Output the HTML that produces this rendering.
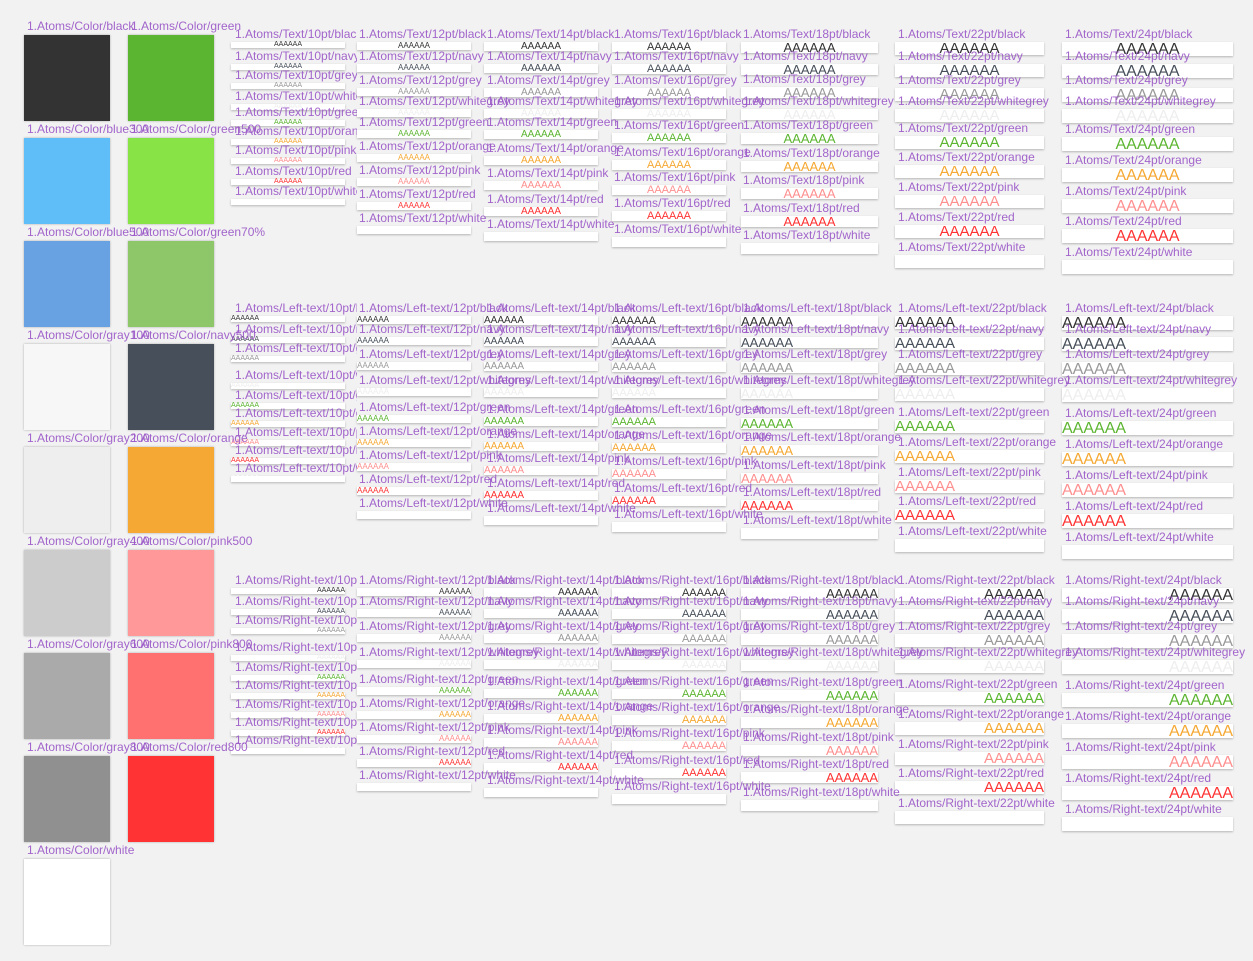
<!DOCTYPE html>
<html><head><meta charset="utf-8"><style>
html,body{margin:0;padding:0}
body{width:1253px;height:961px;background:#f2f2f2;position:relative;overflow:hidden;font-family:"Liberation Sans",sans-serif}
i{position:absolute;font-style:normal;font-size:12px;line-height:14px;margin-top:1px;color:#9b59c8;white-space:nowrap;z-index:2;opacity:.92}
b{position:absolute;font-weight:normal;background:#fff;box-shadow:0 1px 2px rgba(0,0,0,.25);white-space:nowrap;overflow:visible;text-align:center;z-index:1}
.sw{position:absolute;width:86px;height:86px;box-shadow:0 0 2px rgba(0,0,0,.3)}
.s10 i{left:235px;width:122px;overflow:hidden}.s10 b{left:231px;width:114px;height:6px;font-size:7px;line-height:6px}
.s12 i{left:359px}.s12 b{left:357px;width:114px;height:8px;font-size:8px;line-height:8px}
.s14 i{left:487px}.s14 b{left:484px;width:114px;height:9px;font-size:10px;line-height:9px}
.s16 i{left:614px}.s16 b{left:612px;width:114px;height:10px;font-size:11px;line-height:10px}
.s18 i{left:743px}.s18 b{left:741px;width:137px;height:11px;font-size:13px;line-height:11px}
.s22 i{left:898px}.s22 b{left:895px;width:149px;height:13px;font-size:15px;line-height:14px}
.s24 i{left:1065px}.s24 b{left:1062px;width:171px;height:14px;font-size:16px;line-height:15px}
.L b{text-align:left}.R b{text-align:right}
.k{color:#333}.n{color:#474f5a}.g{color:#999}.w{color:#eee}.gr{color:#5cb531}.o{color:#f5a833}.p{color:#ff8f8f}.r{color:#ff3333}.wh{color:#fff}
</style></head><body>
<i style="left:27px;top:18px">1.Atoms/Color/black</i><div class="sw" style="left:24px;top:35px;background:#333"></div>
<i style="left:27px;top:121px">1.Atoms/Color/blue300</i><div class="sw" style="left:24px;top:138px;background:#5fbef7"></div>
<i style="left:27px;top:224px">1.Atoms/Color/blue500</i><div class="sw" style="left:24px;top:241px;background:#68a2e3"></div>
<i style="left:27px;top:327px">1.Atoms/Color/gray100</i><div class="sw" style="left:24px;top:344px;background:#f7f7f7"></div>
<i style="left:27px;top:430px">1.Atoms/Color/gray200</i><div class="sw" style="left:24px;top:447px;background:#eee"></div>
<i style="left:27px;top:533px">1.Atoms/Color/gray400</i><div class="sw" style="left:24px;top:550px;background:#ccc"></div>
<i style="left:27px;top:636px">1.Atoms/Color/gray600</i><div class="sw" style="left:24px;top:653px;background:#aaa"></div>
<i style="left:27px;top:739px">1.Atoms/Color/gray800</i><div class="sw" style="left:24px;top:756px;background:#909090"></div>
<i style="left:27px;top:842px">1.Atoms/Color/white</i><div class="sw" style="left:24px;top:859px;background:#fff"></div>
<i style="left:131px;top:18px">1.Atoms/Color/green</i><div class="sw" style="left:128px;top:35px;background:#5cb531"></div>
<i style="left:131px;top:121px">1.Atoms/Color/green500</i><div class="sw" style="left:128px;top:138px;background:#87e346"></div>
<i style="left:131px;top:224px">1.Atoms/Color/green70%</i><div class="sw" style="left:128px;top:241px;background:#8ec76a"></div>
<i style="left:131px;top:327px">1.Atoms/Color/navy500</i><div class="sw" style="left:128px;top:344px;background:#474f5a"></div>
<i style="left:131px;top:430px">1.Atoms/Color/orange</i><div class="sw" style="left:128px;top:447px;background:#f5a833"></div>
<i style="left:131px;top:533px">1.Atoms/Color/pink500</i><div class="sw" style="left:128px;top:550px;background:#ff9999"></div>
<i style="left:131px;top:636px">1.Atoms/Color/pink800</i><div class="sw" style="left:128px;top:653px;background:#ff7070"></div>
<i style="left:131px;top:739px">1.Atoms/Color/red800</i><div class="sw" style="left:128px;top:756px;background:#ff3333"></div>

<div class="s10">
<i style="top:26px">1.Atoms/Text/10pt/black</i><b class="k" style="top:42px">AAAAAA</b>
<i style="top:48px">1.Atoms/Text/10pt/navy</i><b class="n" style="top:64px">AAAAAA</b>
<i style="top:67px">1.Atoms/Text/10pt/grey</i><b class="g" style="top:83px">AAAAAA</b>
<i style="top:88px">1.Atoms/Text/10pt/whitegrey</i><b class="w" style="top:104px">AAAAAA</b>
<i style="top:104px">1.Atoms/Text/10pt/green</i><b class="gr" style="top:120px">AAAAAA</b>
<i style="top:123px">1.Atoms/Text/10pt/orange</i><b class="o" style="top:139px">AAAAAA</b>
<i style="top:142px">1.Atoms/Text/10pt/pink</i><b class="p" style="top:158px">AAAAAA</b>
<i style="top:163px">1.Atoms/Text/10pt/red</i><b class="r" style="top:179px">AAAAAA</b>
<i style="top:183px">1.Atoms/Text/10pt/white</i><b class="wh" style="top:199px">AAAAAA</b>
</div>
<div class="s12">
<i style="top:26px">1.Atoms/Text/12pt/black</i><b class="k" style="top:42px">AAAAAA</b>
<i style="top:48px">1.Atoms/Text/12pt/navy</i><b class="n" style="top:64px">AAAAAA</b>
<i style="top:72px">1.Atoms/Text/12pt/grey</i><b class="g" style="top:88px">AAAAAA</b>
<i style="top:93px">1.Atoms/Text/12pt/whitegrey</i><b class="w" style="top:109px">AAAAAA</b>
<i style="top:114px">1.Atoms/Text/12pt/green</i><b class="gr" style="top:130px">AAAAAA</b>
<i style="top:138px">1.Atoms/Text/12pt/orange</i><b class="o" style="top:154px">AAAAAA</b>
<i style="top:162px">1.Atoms/Text/12pt/pink</i><b class="p" style="top:178px">AAAAAA</b>
<i style="top:186px">1.Atoms/Text/12pt/red</i><b class="r" style="top:202px">AAAAAA</b>
<i style="top:210px">1.Atoms/Text/12pt/white</i><b class="wh" style="top:226px">AAAAAA</b>
</div>
<div class="s14">
<i style="top:26px">1.Atoms/Text/14pt/black</i><b class="k" style="top:42px">AAAAAA</b>
<i style="top:48px">1.Atoms/Text/14pt/navy</i><b class="n" style="top:64px">AAAAAA</b>
<i style="top:72px">1.Atoms/Text/14pt/grey</i><b class="g" style="top:88px">AAAAAA</b>
<i style="top:93px">1.Atoms/Text/14pt/whitegrey</i><b class="w" style="top:109px">AAAAAA</b>
<i style="top:114px">1.Atoms/Text/14pt/green</i><b class="gr" style="top:130px">AAAAAA</b>
<i style="top:140px">1.Atoms/Text/14pt/orange</i><b class="o" style="top:156px">AAAAAA</b>
<i style="top:165px">1.Atoms/Text/14pt/pink</i><b class="p" style="top:181px">AAAAAA</b>
<i style="top:191px">1.Atoms/Text/14pt/red</i><b class="r" style="top:207px">AAAAAA</b>
<i style="top:216px">1.Atoms/Text/14pt/white</i><b class="wh" style="top:232px">AAAAAA</b>
</div>
<div class="s16">
<i style="top:26px">1.Atoms/Text/16pt/black</i><b class="k" style="top:42px">AAAAAA</b>
<i style="top:48px">1.Atoms/Text/16pt/navy</i><b class="n" style="top:64px">AAAAAA</b>
<i style="top:72px">1.Atoms/Text/16pt/grey</i><b class="g" style="top:88px">AAAAAA</b>
<i style="top:93px">1.Atoms/Text/16pt/whitegrey</i><b class="w" style="top:109px">AAAAAA</b>
<i style="top:117px">1.Atoms/Text/16pt/green</i><b class="gr" style="top:133px">AAAAAA</b>
<i style="top:144px">1.Atoms/Text/16pt/orange</i><b class="o" style="top:160px">AAAAAA</b>
<i style="top:169px">1.Atoms/Text/16pt/pink</i><b class="p" style="top:185px">AAAAAA</b>
<i style="top:195px">1.Atoms/Text/16pt/red</i><b class="r" style="top:211px">AAAAAA</b>
<i style="top:221px">1.Atoms/Text/16pt/white</i><b class="wh" style="top:237px">AAAAAA</b>
</div>
<div class="s18">
<i style="top:26px">1.Atoms/Text/18pt/black</i><b class="k" style="top:42px">AAAAAA</b>
<i style="top:48px">1.Atoms/Text/18pt/navy</i><b class="n" style="top:64px">AAAAAA</b>
<i style="top:71px">1.Atoms/Text/18pt/grey</i><b class="g" style="top:87px">AAAAAA</b>
<i style="top:93px">1.Atoms/Text/18pt/whitegrey</i><b class="w" style="top:109px">AAAAAA</b>
<i style="top:117px">1.Atoms/Text/18pt/green</i><b class="gr" style="top:133px">AAAAAA</b>
<i style="top:145px">1.Atoms/Text/18pt/orange</i><b class="o" style="top:161px">AAAAAA</b>
<i style="top:172px">1.Atoms/Text/18pt/pink</i><b class="p" style="top:188px">AAAAAA</b>
<i style="top:200px">1.Atoms/Text/18pt/red</i><b class="r" style="top:216px">AAAAAA</b>
<i style="top:227px">1.Atoms/Text/18pt/white</i><b class="wh" style="top:243px">AAAAAA</b>
</div>
<div class="s22">
<i style="top:26px">1.Atoms/Text/22pt/black</i><b class="k" style="top:42px">AAAAAA</b>
<i style="top:48px">1.Atoms/Text/22pt/navy</i><b class="n" style="top:64px">AAAAAA</b>
<i style="top:72px">1.Atoms/Text/22pt/grey</i><b class="g" style="top:88px">AAAAAA</b>
<i style="top:93px">1.Atoms/Text/22pt/whitegrey</i><b class="w" style="top:109px">AAAAAA</b>
<i style="top:120px">1.Atoms/Text/22pt/green</i><b class="gr" style="top:136px">AAAAAA</b>
<i style="top:149px">1.Atoms/Text/22pt/orange</i><b class="o" style="top:165px">AAAAAA</b>
<i style="top:179px">1.Atoms/Text/22pt/pink</i><b class="p" style="top:195px">AAAAAA</b>
<i style="top:209px">1.Atoms/Text/22pt/red</i><b class="r" style="top:225px">AAAAAA</b>
<i style="top:239px">1.Atoms/Text/22pt/white</i><b class="wh" style="top:255px">AAAAAA</b>
</div>
<div class="s24">
<i style="top:26px">1.Atoms/Text/24pt/black</i><b class="k" style="top:42px">AAAAAA</b>
<i style="top:48px">1.Atoms/Text/24pt/navy</i><b class="n" style="top:64px">AAAAAA</b>
<i style="top:72px">1.Atoms/Text/24pt/grey</i><b class="g" style="top:88px">AAAAAA</b>
<i style="top:93px">1.Atoms/Text/24pt/whitegrey</i><b class="w" style="top:109px">AAAAAA</b>
<i style="top:121px">1.Atoms/Text/24pt/green</i><b class="gr" style="top:137px">AAAAAA</b>
<i style="top:152px">1.Atoms/Text/24pt/orange</i><b class="o" style="top:168px">AAAAAA</b>
<i style="top:183px">1.Atoms/Text/24pt/pink</i><b class="p" style="top:199px">AAAAAA</b>
<i style="top:213px">1.Atoms/Text/24pt/red</i><b class="r" style="top:229px">AAAAAA</b>
<i style="top:244px">1.Atoms/Text/24pt/white</i><b class="wh" style="top:260px">AAAAAA</b>
</div>

<div class="s10 L">
<i style="top:300px">1.Atoms/Left-text/10pt/black</i><b class="k" style="top:316px">AAAAAA</b>
<i style="top:321px">1.Atoms/Left-text/10pt/navy</i><b class="n" style="top:337px">AAAAAA</b>
<i style="top:340px">1.Atoms/Left-text/10pt/grey</i><b class="g" style="top:356px">AAAAAA</b>
<i style="top:367px">1.Atoms/Left-text/10pt/whitegrey</i><b class="w" style="top:383px">AAAAAA</b>
<i style="top:387px">1.Atoms/Left-text/10pt/green</i><b class="gr" style="top:403px">AAAAAA</b>
<i style="top:405px">1.Atoms/Left-text/10pt/orange</i><b class="o" style="top:421px">AAAAAA</b>
<i style="top:424px">1.Atoms/Left-text/10pt/pink</i><b class="p" style="top:440px">AAAAAA</b>
<i style="top:442px">1.Atoms/Left-text/10pt/red</i><b class="r" style="top:458px">AAAAAA</b>
<i style="top:460px">1.Atoms/Left-text/10pt/white</i><b class="wh" style="top:476px">AAAAAA</b>
</div>
<div class="s12 L">
<i style="top:300px">1.Atoms/Left-text/12pt/black</i><b class="k" style="top:316px">AAAAAA</b>
<i style="top:321px">1.Atoms/Left-text/12pt/navy</i><b class="n" style="top:337px">AAAAAA</b>
<i style="top:346px">1.Atoms/Left-text/12pt/grey</i><b class="g" style="top:362px">AAAAAA</b>
<i style="top:372px">1.Atoms/Left-text/12pt/whitegrey</i><b class="w" style="top:388px">AAAAAA</b>
<i style="top:399px">1.Atoms/Left-text/12pt/green</i><b class="gr" style="top:415px">AAAAAA</b>
<i style="top:423px">1.Atoms/Left-text/12pt/orange</i><b class="o" style="top:439px">AAAAAA</b>
<i style="top:447px">1.Atoms/Left-text/12pt/pink</i><b class="p" style="top:463px">AAAAAA</b>
<i style="top:471px">1.Atoms/Left-text/12pt/red</i><b class="r" style="top:487px">AAAAAA</b>
<i style="top:495px">1.Atoms/Left-text/12pt/white</i><b class="wh" style="top:511px">AAAAAA</b>
</div>
<div class="s14 L">
<i style="top:300px">1.Atoms/Left-text/14pt/black</i><b class="k" style="top:316px">AAAAAA</b>
<i style="top:321px">1.Atoms/Left-text/14pt/navy</i><b class="n" style="top:337px">AAAAAA</b>
<i style="top:346px">1.Atoms/Left-text/14pt/grey</i><b class="g" style="top:362px">AAAAAA</b>
<i style="top:372px">1.Atoms/Left-text/14pt/whitegrey</i><b class="w" style="top:388px">AAAAAA</b>
<i style="top:401px">1.Atoms/Left-text/14pt/green</i><b class="gr" style="top:417px">AAAAAA</b>
<i style="top:426px">1.Atoms/Left-text/14pt/orange</i><b class="o" style="top:442px">AAAAAA</b>
<i style="top:450px">1.Atoms/Left-text/14pt/pink</i><b class="p" style="top:466px">AAAAAA</b>
<i style="top:475px">1.Atoms/Left-text/14pt/red</i><b class="r" style="top:491px">AAAAAA</b>
<i style="top:500px">1.Atoms/Left-text/14pt/white</i><b class="wh" style="top:516px">AAAAAA</b>
</div>
<div class="s16 L">
<i style="top:300px">1.Atoms/Left-text/16pt/black</i><b class="k" style="top:316px">AAAAAA</b>
<i style="top:321px">1.Atoms/Left-text/16pt/navy</i><b class="n" style="top:337px">AAAAAA</b>
<i style="top:346px">1.Atoms/Left-text/16pt/grey</i><b class="g" style="top:362px">AAAAAA</b>
<i style="top:372px">1.Atoms/Left-text/16pt/whitegrey</i><b class="w" style="top:388px">AAAAAA</b>
<i style="top:401px">1.Atoms/Left-text/16pt/green</i><b class="gr" style="top:417px">AAAAAA</b>
<i style="top:427px">1.Atoms/Left-text/16pt/orange</i><b class="o" style="top:443px">AAAAAA</b>
<i style="top:453px">1.Atoms/Left-text/16pt/pink</i><b class="p" style="top:469px">AAAAAA</b>
<i style="top:480px">1.Atoms/Left-text/16pt/red</i><b class="r" style="top:496px">AAAAAA</b>
<i style="top:506px">1.Atoms/Left-text/16pt/white</i><b class="wh" style="top:522px">AAAAAA</b>
</div>
<div class="s18 L">
<i style="top:300px">1.Atoms/Left-text/18pt/black</i><b class="k" style="top:316px">AAAAAA</b>
<i style="top:321px">1.Atoms/Left-text/18pt/navy</i><b class="n" style="top:337px">AAAAAA</b>
<i style="top:346px">1.Atoms/Left-text/18pt/grey</i><b class="g" style="top:362px">AAAAAA</b>
<i style="top:372px">1.Atoms/Left-text/18pt/whitegrey</i><b class="w" style="top:388px">AAAAAA</b>
<i style="top:402px">1.Atoms/Left-text/18pt/green</i><b class="gr" style="top:418px">AAAAAA</b>
<i style="top:429px">1.Atoms/Left-text/18pt/orange</i><b class="o" style="top:445px">AAAAAA</b>
<i style="top:457px">1.Atoms/Left-text/18pt/pink</i><b class="p" style="top:473px">AAAAAA</b>
<i style="top:484px">1.Atoms/Left-text/18pt/red</i><b class="r" style="top:500px">AAAAAA</b>
<i style="top:512px">1.Atoms/Left-text/18pt/white</i><b class="wh" style="top:528px">AAAAAA</b>
</div>
<div class="s22 L">
<i style="top:300px">1.Atoms/Left-text/22pt/black</i><b class="k" style="top:316px">AAAAAA</b>
<i style="top:321px">1.Atoms/Left-text/22pt/navy</i><b class="n" style="top:337px">AAAAAA</b>
<i style="top:346px">1.Atoms/Left-text/22pt/grey</i><b class="g" style="top:362px">AAAAAA</b>
<i style="top:372px">1.Atoms/Left-text/22pt/whitegrey</i><b class="w" style="top:388px">AAAAAA</b>
<i style="top:404px">1.Atoms/Left-text/22pt/green</i><b class="gr" style="top:420px">AAAAAA</b>
<i style="top:434px">1.Atoms/Left-text/22pt/orange</i><b class="o" style="top:450px">AAAAAA</b>
<i style="top:464px">1.Atoms/Left-text/22pt/pink</i><b class="p" style="top:480px">AAAAAA</b>
<i style="top:493px">1.Atoms/Left-text/22pt/red</i><b class="r" style="top:509px">AAAAAA</b>
<i style="top:523px">1.Atoms/Left-text/22pt/white</i><b class="wh" style="top:539px">AAAAAA</b>
</div>
<div class="s24 L">
<i style="top:300px">1.Atoms/Left-text/24pt/black</i><b class="k" style="top:316px">AAAAAA</b>
<i style="top:321px">1.Atoms/Left-text/24pt/navy</i><b class="n" style="top:337px">AAAAAA</b>
<i style="top:346px">1.Atoms/Left-text/24pt/grey</i><b class="g" style="top:362px">AAAAAA</b>
<i style="top:372px">1.Atoms/Left-text/24pt/whitegrey</i><b class="w" style="top:388px">AAAAAA</b>
<i style="top:405px">1.Atoms/Left-text/24pt/green</i><b class="gr" style="top:421px">AAAAAA</b>
<i style="top:436px">1.Atoms/Left-text/24pt/orange</i><b class="o" style="top:452px">AAAAAA</b>
<i style="top:467px">1.Atoms/Left-text/24pt/pink</i><b class="p" style="top:483px">AAAAAA</b>
<i style="top:498px">1.Atoms/Left-text/24pt/red</i><b class="r" style="top:514px">AAAAAA</b>
<i style="top:529px">1.Atoms/Left-text/24pt/white</i><b class="wh" style="top:545px">AAAAAA</b>
</div>

<div class="s10 R">
<i style="top:572px">1.Atoms/Right-text/10pt/black</i><b class="k" style="top:588px">AAAAAA</b>
<i style="top:593px">1.Atoms/Right-text/10pt/navy</i><b class="n" style="top:609px">AAAAAA</b>
<i style="top:612px">1.Atoms/Right-text/10pt/grey</i><b class="g" style="top:628px">AAAAAA</b>
<i style="top:639px">1.Atoms/Right-text/10pt/whitegrey</i><b class="w" style="top:655px">AAAAAA</b>
<i style="top:659px">1.Atoms/Right-text/10pt/green</i><b class="gr" style="top:675px">AAAAAA</b>
<i style="top:677px">1.Atoms/Right-text/10pt/orange</i><b class="o" style="top:693px">AAAAAA</b>
<i style="top:696px">1.Atoms/Right-text/10pt/pink</i><b class="p" style="top:712px">AAAAAA</b>
<i style="top:714px">1.Atoms/Right-text/10pt/red</i><b class="r" style="top:730px">AAAAAA</b>
<i style="top:732px">1.Atoms/Right-text/10pt/white</i><b class="wh" style="top:748px">AAAAAA</b>
</div>
<div class="s12 R">
<i style="top:572px">1.Atoms/Right-text/12pt/black</i><b class="k" style="top:588px">AAAAAA</b>
<i style="top:593px">1.Atoms/Right-text/12pt/navy</i><b class="n" style="top:609px">AAAAAA</b>
<i style="top:618px">1.Atoms/Right-text/12pt/grey</i><b class="g" style="top:634px">AAAAAA</b>
<i style="top:644px">1.Atoms/Right-text/12pt/whitegrey</i><b class="w" style="top:660px">AAAAAA</b>
<i style="top:671px">1.Atoms/Right-text/12pt/green</i><b class="gr" style="top:687px">AAAAAA</b>
<i style="top:695px">1.Atoms/Right-text/12pt/orange</i><b class="o" style="top:711px">AAAAAA</b>
<i style="top:719px">1.Atoms/Right-text/12pt/pink</i><b class="p" style="top:735px">AAAAAA</b>
<i style="top:743px">1.Atoms/Right-text/12pt/red</i><b class="r" style="top:759px">AAAAAA</b>
<i style="top:767px">1.Atoms/Right-text/12pt/white</i><b class="wh" style="top:783px">AAAAAA</b>
</div>
<div class="s14 R">
<i style="top:572px">1.Atoms/Right-text/14pt/black</i><b class="k" style="top:588px">AAAAAA</b>
<i style="top:593px">1.Atoms/Right-text/14pt/navy</i><b class="n" style="top:609px">AAAAAA</b>
<i style="top:618px">1.Atoms/Right-text/14pt/grey</i><b class="g" style="top:634px">AAAAAA</b>
<i style="top:644px">1.Atoms/Right-text/14pt/whitegrey</i><b class="w" style="top:660px">AAAAAA</b>
<i style="top:673px">1.Atoms/Right-text/14pt/green</i><b class="gr" style="top:689px">AAAAAA</b>
<i style="top:698px">1.Atoms/Right-text/14pt/orange</i><b class="o" style="top:714px">AAAAAA</b>
<i style="top:722px">1.Atoms/Right-text/14pt/pink</i><b class="p" style="top:738px">AAAAAA</b>
<i style="top:747px">1.Atoms/Right-text/14pt/red</i><b class="r" style="top:763px">AAAAAA</b>
<i style="top:772px">1.Atoms/Right-text/14pt/white</i><b class="wh" style="top:788px">AAAAAA</b>
</div>
<div class="s16 R">
<i style="top:572px">1.Atoms/Right-text/16pt/black</i><b class="k" style="top:588px">AAAAAA</b>
<i style="top:593px">1.Atoms/Right-text/16pt/navy</i><b class="n" style="top:609px">AAAAAA</b>
<i style="top:618px">1.Atoms/Right-text/16pt/grey</i><b class="g" style="top:634px">AAAAAA</b>
<i style="top:644px">1.Atoms/Right-text/16pt/whitegrey</i><b class="w" style="top:660px">AAAAAA</b>
<i style="top:673px">1.Atoms/Right-text/16pt/green</i><b class="gr" style="top:689px">AAAAAA</b>
<i style="top:699px">1.Atoms/Right-text/16pt/orange</i><b class="o" style="top:715px">AAAAAA</b>
<i style="top:725px">1.Atoms/Right-text/16pt/pink</i><b class="p" style="top:741px">AAAAAA</b>
<i style="top:752px">1.Atoms/Right-text/16pt/red</i><b class="r" style="top:768px">AAAAAA</b>
<i style="top:778px">1.Atoms/Right-text/16pt/white</i><b class="wh" style="top:794px">AAAAAA</b>
</div>
<div class="s18 R">
<i style="top:572px">1.Atoms/Right-text/18pt/black</i><b class="k" style="top:588px">AAAAAA</b>
<i style="top:593px">1.Atoms/Right-text/18pt/navy</i><b class="n" style="top:609px">AAAAAA</b>
<i style="top:618px">1.Atoms/Right-text/18pt/grey</i><b class="g" style="top:634px">AAAAAA</b>
<i style="top:644px">1.Atoms/Right-text/18pt/whitegrey</i><b class="w" style="top:660px">AAAAAA</b>
<i style="top:674px">1.Atoms/Right-text/18pt/green</i><b class="gr" style="top:690px">AAAAAA</b>
<i style="top:701px">1.Atoms/Right-text/18pt/orange</i><b class="o" style="top:717px">AAAAAA</b>
<i style="top:729px">1.Atoms/Right-text/18pt/pink</i><b class="p" style="top:745px">AAAAAA</b>
<i style="top:756px">1.Atoms/Right-text/18pt/red</i><b class="r" style="top:772px">AAAAAA</b>
<i style="top:784px">1.Atoms/Right-text/18pt/white</i><b class="wh" style="top:800px">AAAAAA</b>
</div>
<div class="s22 R">
<i style="top:572px">1.Atoms/Right-text/22pt/black</i><b class="k" style="top:588px">AAAAAA</b>
<i style="top:593px">1.Atoms/Right-text/22pt/navy</i><b class="n" style="top:609px">AAAAAA</b>
<i style="top:618px">1.Atoms/Right-text/22pt/grey</i><b class="g" style="top:634px">AAAAAA</b>
<i style="top:644px">1.Atoms/Right-text/22pt/whitegrey</i><b class="w" style="top:660px">AAAAAA</b>
<i style="top:676px">1.Atoms/Right-text/22pt/green</i><b class="gr" style="top:692px">AAAAAA</b>
<i style="top:706px">1.Atoms/Right-text/22pt/orange</i><b class="o" style="top:722px">AAAAAA</b>
<i style="top:736px">1.Atoms/Right-text/22pt/pink</i><b class="p" style="top:752px">AAAAAA</b>
<i style="top:765px">1.Atoms/Right-text/22pt/red</i><b class="r" style="top:781px">AAAAAA</b>
<i style="top:795px">1.Atoms/Right-text/22pt/white</i><b class="wh" style="top:811px">AAAAAA</b>
</div>
<div class="s24 R">
<i style="top:572px">1.Atoms/Right-text/24pt/black</i><b class="k" style="top:588px">AAAAAA</b>
<i style="top:593px">1.Atoms/Right-text/24pt/navy</i><b class="n" style="top:609px">AAAAAA</b>
<i style="top:618px">1.Atoms/Right-text/24pt/grey</i><b class="g" style="top:634px">AAAAAA</b>
<i style="top:644px">1.Atoms/Right-text/24pt/whitegrey</i><b class="w" style="top:660px">AAAAAA</b>
<i style="top:677px">1.Atoms/Right-text/24pt/green</i><b class="gr" style="top:693px">AAAAAA</b>
<i style="top:708px">1.Atoms/Right-text/24pt/orange</i><b class="o" style="top:724px">AAAAAA</b>
<i style="top:739px">1.Atoms/Right-text/24pt/pink</i><b class="p" style="top:755px">AAAAAA</b>
<i style="top:770px">1.Atoms/Right-text/24pt/red</i><b class="r" style="top:786px">AAAAAA</b>
<i style="top:801px">1.Atoms/Right-text/24pt/white</i><b class="wh" style="top:817px">AAAAAA</b>
</div>
</body></html>
